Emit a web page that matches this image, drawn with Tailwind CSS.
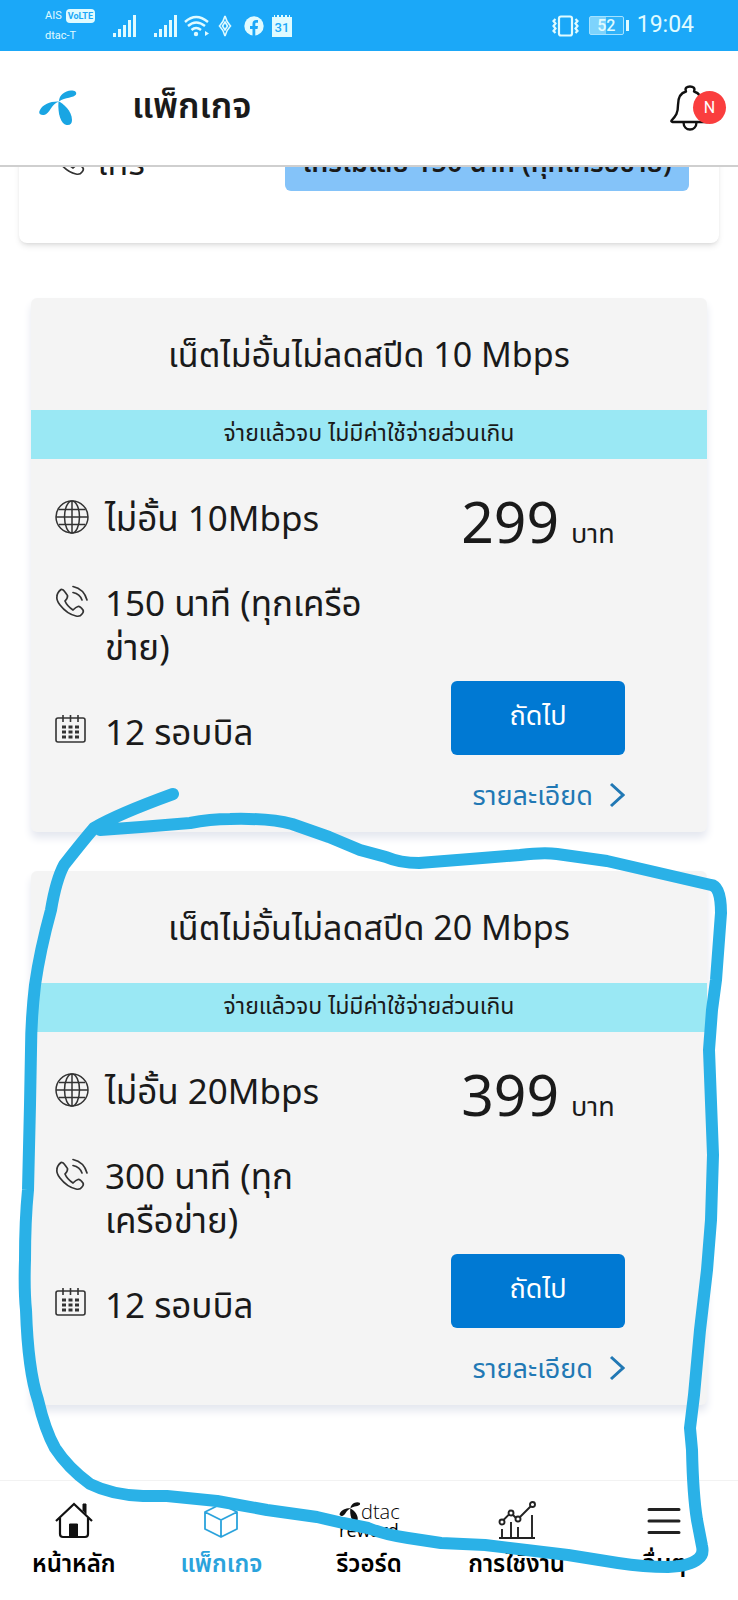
<!DOCTYPE html>
<html lang="th">
<head>
    <meta charset="UTF-8">
    <meta name="viewport" content="width=device-width, initial-scale=1.0">
    <title>แพ็กเกจ</title>
    <script src="https://cdn.jsdelivr.net/npm/@tailwindcss/browser@4"></script>
</head>
<body class="relative flex min-h-screen flex-col overflow-x-hidden bg-white font-['Noto_Sans','Noto_Sans_Thai',sans-serif] text-[#1a1a1a]">

    <!-- Status bar -->
    <div class="flex h-[51px] shrink-0 items-center bg-[#1ba8f8] pl-[45px] pr-11 font-['Roboto',sans-serif] text-[#e0fbff]">
        <div class="w-[68px] text-[11px] leading-5">
            <div class="flex items-center gap-1">AIS <span class="rounded-sm bg-[#e0fbff] px-0.5 text-[9px] font-bold leading-[14px] text-[#1ba8f8]">VoLTE</span></div>
            <div>dtac-T</div>
        </div>
        <svg class="h-[22px] w-6" viewBox="0 0 24 22" fill="currentColor"><path d="M0 18h3v4H0zM5 14h3v8H5zM10 10h3v12h-3zM15 5h3v17h-3zM20 0h3v22h-3z"/></svg>
        <svg class="ml-[17px] h-[22px] w-6" viewBox="0 0 24 22" fill="currentColor"><path d="M0 18h3v4H0zM5 14h3v8H5zM10 10h3v12h-3zM15 5h3v17h-3zM20 0h3v22h-3z"/></svg>
        <svg class="ml-1.5 h-[22px] w-[26px]" viewBox="0 0 26 22" fill="none" stroke="currentColor" stroke-width="2.4"><path d="M1 7Q12 -3 24 7M4 11Q12 4 21 11M7.500 15Q12 11 17 15"/><circle cx="12" cy="19" r="2.200" fill="currentColor" stroke="none"/><path d="M21 16v5l4-2.500z" fill="currentColor" stroke="none"/></svg>
        <svg class="ml-2 h-[22px] w-[14px]" viewBox="0 0 14 22" fill="none" stroke="currentColor" stroke-width="1.600"><path d="M7 1Q5.500 7 1.500 11Q5.500 15 7 21Q8.500 15 12.500 11Q8.500 7 7 1z"/><path d="M7 7l2.500 4L7 15l-2.500-4z"/></svg>
        <svg class="ml-3 h-5 w-5" viewBox="0 0 20 20"><circle cx="10" cy="10" r="9.700" fill="currentColor"/><path d="M8.500 20v-7H6v-3h2.500V7.800C8.500 5.200 10 4 12 4h2v2.700h-1.400c-1 0-1.300.5-1.300 1.300v2H14l-.5 3h-2.200v7z" fill="#1ba8f8"/></svg>
        <div class="ml-2 flex h-[22px] w-5 items-end justify-center border-t-2 border-dotted border-[#1ba8f8] bg-[#e0fbff] text-[13px] font-medium leading-[18px] text-[#1ba8f8]">31</div>
        <svg class="ml-auto h-[22px] w-[27px]" viewBox="0 0 27 22" fill="none" stroke="currentColor" stroke-width="2.200"><rect x="7" y="1.500" width="13" height="19" rx="2"/><path d="M3.500 4l-2 2 2 2.500-2 2.500 2 2.500-2 2.500 2 2M23.500 4l2 2-2 2.500 2 2.500-2 2.500 2 2.500-2 2"/></svg>
        <div class="ml-[10px] flex h-[19px] w-[35px] items-center justify-center rounded-xs border border-[#a5e2ff] bg-linear-to-r from-[#7dd3fc] from-50% to-[#2fb2f9] to-50% text-base font-medium">52</div>
        <div class="ml-0.5 h-[11px] w-[3px] bg-[#e0fbff]"></div>
        <div class="ml-2 text-[23px]">19:04</div>
    </div>

    <!-- Header -->
    <header class="z-10 flex h-[116px] shrink-0 items-center border-b-2 border-[#cfcfcf] bg-white pl-[39px] pr-3">
        <svg class="h-[36px] w-[38px]" viewBox="0 0 38 36" fill="#19a5e3"><path d="M20 11.500C20 5 26 1 32 .5c4 0 6 1.500 5 4C35 8 26 7 20 11.500z"/><path d="M20 11.500C12 11 4 14 1 20c-2 3 0 5.500 4 5 6-1 7-11 15-13.500z"/><path d="M19.500 11.500C24 13 33 21 33 30c0 4-2 5.500-5.500 5C22 34 18.500 24 19.500 11.500z"/></svg>
        <h1 class="-mt-1.5 ml-[55px] text-[35px] font-semibold">แพ็กเกจ</h1>
        <button class="relative ml-auto h-[46px] w-[57px]" aria-label="การแจ้งเตือน">
            <svg class="h-[46px] w-[42px]" viewBox="0 0 42 46" fill="none" stroke="#111" stroke-width="2.400" stroke-linejoin="round"><path d="M17 6.500C15.500 3 18 1.500 21 1.500s5.500 1.500 4 5C31 8 33 13 33 20c0 8 2 11 6.500 15.500.5.700 0 1.500-1 1.500H3.500c-1 0-1.500-1-1-1.500C7 31 9 28 9 20c0-7 2-12 8-13.500z"/><path d="M14.500 37c0 10 13 10 13 0"/></svg>
            <span class="absolute right-0 top-1.5 flex h-[33px] w-[33px] items-center justify-center rounded-full bg-[#fa3e3e] font-['Roboto',sans-serif] text-base text-white">N</span>
        </button>
    </header>

    <main class="flex-1 overflow-hidden">
        <!-- Previous card, scrolled under the header -->
        <section class="-mt-10 mx-[19px] flex h-[116px] items-start rounded-lg bg-white pl-9 pr-[30px] shadow-md">
            <svg class="mt-4 h-[34px] w-[34px]" viewBox="0 0 34 34" fill="none" stroke="#333" stroke-width="1.700" stroke-linecap="round"><path d="M2 11Q2 8 6 4.500Q8 4 10 7L12.500 10.500Q13 13 10 16Q12 21 18 25Q21 22 23 21.500Q25 21 28 25Q29 27 27 29Q25 32 21 31Q12 29 5 20Q1 15 2 11zM18 7.500Q25 9 27 15M18 1.500Q29 4 32 15"/></svg>
            <span class="ml-2 mt-3 text-[34px] leading-[46px]">โทร</span>
            <span class="ml-auto flex h-16 w-[404px] items-start justify-center rounded-md bg-[#84c3f9] pt-3 text-[27px] font-semibold leading-[46px]"><span class="whitespace-nowrap">โทรไม่เสีย 150 นาที (ทุกเครือข่าย)</span></span>
        </section>

        <!-- 10 Mbps -->
        <section class="mx-[31px] mt-[55px] h-[534px] rounded-md bg-[#f4f4f4] shadow-[0_6px_8px_#e4e7ef]">
            <h2 class="flex h-[112px] items-center justify-center text-[34px]">เน็ตไม่อั้นไม่ลดสปีด 10 Mbps</h2>
            <p class="flex h-[49px] items-center justify-center bg-[#9ae8f4] pb-1 text-[23px]">จ่ายแล้วจบ ไม่มีค่าใช้จ่ายส่วนเกิน</p>
            <div class="flex justify-between pl-6 pr-[82px]">
                <ul class="pt-[37px] text-[35px] leading-[44px]">
                    <li class="flex gap-4">
                        <svg class="mt-1 h-[34px] w-[34px] shrink-0" viewBox="0 0 34 34" fill="none" stroke="#333" stroke-width="1.500"><circle cx="17" cy="17" r="16"/><ellipse cx="17" cy="17" rx="7.500" ry="16"/><path d="M17 1v32M1 17h32M4 9.500h26M4 24.500h26"/></svg>
                        <span>ไม่อั้น 10Mbps</span>
                    </li>
                    <li class="mt-[41px] flex gap-4">
                        <svg class="mt-1 h-[34px] w-[34px] shrink-0" viewBox="0 0 34 34" fill="none" stroke="#333" stroke-width="1.700" stroke-linecap="round"><path d="M2 11Q2 8 6 4.500Q8 4 10 7L12.500 10.500Q13 13 10 16Q12 21 18 25Q21 22 23 21.500Q25 21 28 25Q29 27 27 29Q25 32 21 31Q12 29 5 20Q1 15 2 11zM18 7.500Q25 9 27 15M18 1.500Q29 4 32 15"/></svg>
                        <span class="whitespace-nowrap">150 นาที (ทุกเครือ<br>ข่าย)</span>
                    </li>
                    <li class="mt-[41px] flex gap-4">
                        <svg class="mt-1 h-[34px] w-[34px] shrink-0" viewBox="0 0 34 34" fill="none" stroke="#333" stroke-width="1.600"><rect x="1" y="4" width="29" height="24" rx="2"/><path d="M8 1v7M15.500 1v7M23 1v7"/><path d="M7 13h17M7 18h17M7 23h17" stroke-width="3" stroke-dasharray="4 2.500"/></svg>
                        <span>12 รอบบิล</span>
                    </li>
                </ul>
                <div class="flex w-[174px] flex-col">
                    <p class="mt-[26px] flex h-[72px] items-baseline justify-center gap-3 text-[57px] leading-[72px]">299 <span class="text-[27px]">บาท</span></p>
                    <button class="mt-[124px] h-[74px] rounded-md bg-[#0079d3] pb-1.5 text-[27px] text-white">ถัดไป</button>
                    <a href="#" class="mt-5 flex h-10 items-center justify-end gap-4 whitespace-nowrap text-[27px] text-[#2178b4]">รายละเอียด
                        <svg class="h-[26px] w-4" viewBox="0 0 16 26" fill="none" stroke="currentColor" stroke-width="3"><path d="M2 2l12 11L2 24"/></svg>
                    </a>
                </div>
            </div>
        </section>

        <!-- 20 Mbps -->
        <section class="mx-[31px] mt-[39px] h-[534px] rounded-md bg-[#f4f4f4] shadow-[0_6px_8px_#e4e7ef]">
            <h2 class="flex h-[112px] items-center justify-center text-[34px]">เน็ตไม่อั้นไม่ลดสปีด 20 Mbps</h2>
            <p class="flex h-[49px] items-center justify-center bg-[#9ae8f4] pb-1 text-[23px]">จ่ายแล้วจบ ไม่มีค่าใช้จ่ายส่วนเกิน</p>
            <div class="flex justify-between pl-6 pr-[82px]">
                <ul class="pt-[37px] text-[35px] leading-[44px]">
                    <li class="flex gap-4">
                        <svg class="mt-1 h-[34px] w-[34px] shrink-0" viewBox="0 0 34 34" fill="none" stroke="#333" stroke-width="1.500"><circle cx="17" cy="17" r="16"/><ellipse cx="17" cy="17" rx="7.500" ry="16"/><path d="M17 1v32M1 17h32M4 9.500h26M4 24.500h26"/></svg>
                        <span>ไม่อั้น 20Mbps</span>
                    </li>
                    <li class="mt-[41px] flex gap-4">
                        <svg class="mt-1 h-[34px] w-[34px] shrink-0" viewBox="0 0 34 34" fill="none" stroke="#333" stroke-width="1.700" stroke-linecap="round"><path d="M2 11Q2 8 6 4.500Q8 4 10 7L12.500 10.500Q13 13 10 16Q12 21 18 25Q21 22 23 21.500Q25 21 28 25Q29 27 27 29Q25 32 21 31Q12 29 5 20Q1 15 2 11zM18 7.500Q25 9 27 15M18 1.500Q29 4 32 15"/></svg>
                        <span class="whitespace-nowrap">300 นาที (ทุก<br>เครือข่าย)</span>
                    </li>
                    <li class="mt-[41px] flex gap-4">
                        <svg class="mt-1 h-[34px] w-[34px] shrink-0" viewBox="0 0 34 34" fill="none" stroke="#333" stroke-width="1.600"><rect x="1" y="4" width="29" height="24" rx="2"/><path d="M8 1v7M15.500 1v7M23 1v7"/><path d="M7 13h17M7 18h17M7 23h17" stroke-width="3" stroke-dasharray="4 2.500"/></svg>
                        <span>12 รอบบิล</span>
                    </li>
                </ul>
                <div class="flex w-[174px] flex-col">
                    <p class="mt-[26px] flex h-[72px] items-baseline justify-center gap-3 text-[57px] leading-[72px]">399 <span class="text-[27px]">บาท</span></p>
                    <button class="mt-[124px] h-[74px] rounded-md bg-[#0079d3] pb-1.5 text-[27px] text-white">ถัดไป</button>
                    <a href="#" class="mt-5 flex h-10 items-center justify-end gap-4 whitespace-nowrap text-[27px] text-[#2178b4]">รายละเอียด
                        <svg class="h-[26px] w-4" viewBox="0 0 16 26" fill="none" stroke="currentColor" stroke-width="3"><path d="M2 2l12 11L2 24"/></svg>
                    </a>
                </div>
            </div>
        </section>
    </main>

    <!-- Bottom navigation -->
    <nav class="grid h-[120px] shrink-0 grid-cols-5 border-t border-[#f2f2f2] bg-white pt-5 text-center text-2xl font-semibold leading-8 text-black">
        <a href="#" class="flex flex-col items-center gap-1.5">
            <svg class="h-10 w-[38px]" viewBox="0 0 38 40" fill="none" stroke="#111" stroke-width="2.200"><path d="M1 20L19 3l18 17M5 17v16q0 3 3 3h22q3 0 3-3V17"/><path d="M28 10V3h3v10M14.500 23h8v13h-8z" fill="#111" stroke-width="1"/></svg>
            หน้าหลัก
        </a>
        <a href="#" class="flex flex-col items-center gap-1.5 text-[#2ba3dc]">
            <svg class="h-10 w-[34px]" viewBox="0 0 34 40" fill="none" stroke="currentColor" stroke-width="1.800" stroke-linejoin="round"><path d="M17 3l16 8v17l-16 8-16-8V11zM1 11l16 8 16-8M17 19v17"/></svg>
            แพ็กเกจ
        </a>
        <a href="#" class="flex flex-col items-center gap-1.5">
            <span class="flex h-10 w-[60px] flex-col font-['Open_Sans',sans-serif] text-xl font-light leading-[22px]">
                <span class="flex items-center"><svg class="h-5 w-[22px] shrink-0" viewBox="0 0 38 36" fill="#111"><path d="M20 11.500C20 5 26 1 32 .5c4 0 6 1.500 5 4C35 8 26 7 20 11.500z"/><path d="M20 11.500C12 11 4 14 1 20c-2 3 0 5.500 4 5 6-1 7-11 15-13.500z"/><path d="M19.500 11.500C24 13 33 21 33 30c0 4-2 5.500-5.500 5C22 34 18.500 24 19.500 11.500z"/></svg>dtac</span>
                <span class="text-lg font-normal leading-[14px]">reward</span>
            </span>
            รีวอร์ด
        </a>
        <a href="#" class="flex flex-col items-center gap-1.5">
            <svg class="h-10 w-[38px]" viewBox="0 0 38 40" fill="none" stroke="#222" stroke-width="1.900"><path d="M1 37h36M4 37V28M13 37V21M20 37V26M34 37V14"/><path d="M5.500 19l6-6M15 14l3 3M22 16L33 5"/><circle cx="4" cy="21" r="2.500"/><circle cx="13" cy="12" r="2.500"/><circle cx="20" cy="18" r="2.500"/><circle cx="34.500" cy="3.500" r="2.500"/></svg>
            การใช้งาน
        </a>
        <a href="#" class="flex flex-col items-center gap-1.5">
            <svg class="h-10 w-[34px]" viewBox="0 0 34 40" stroke="#222" stroke-width="3" stroke-linecap="round"><path d="M2 8.500h30M2 20h30M2 31.500h30"/></svg>
            อื่นๆ
        </a>
    </nav>

    <!-- Hand-drawn marker loop -->
    <svg class="pointer-events-none absolute inset-x-0 top-0 z-20 w-full" viewBox="0 0 738 1600" fill="none" stroke="#2ab1e7" stroke-width="12" stroke-linejoin="round" stroke-linecap="round">
        <path d="M173 794Q118 814 94 828Q82 842 64 865Q56 880 51 910Q40 950 35 985Q31 1020 31 1050L30 1105L28 1190Q25 1220 25 1260Q24 1290 26 1310Q28 1370 38 1400Q45 1430 55 1448Q68 1468 90 1484Q112 1495 143 1496H167L217 1501L267 1510L317 1517L343 1523L368 1528Q386 1535 408 1538L441 1543L485 1545L518 1549L568 1555L618 1563Q644 1567 668 1567Q690 1566 698 1559Q704 1555 702 1546L697 1520Q693 1495 692 1450L690 1428L694 1395L700 1330L707 1270L711 1220L713 1155L709 1050L712 1010L716 980L721 913Q721 886 711 885L659 873L607 861L557 854Q544 852 520 855L470 859L419 863Q400 863 386 857L360 850L329 837L292 824Q270 818 230 819Q210 819 190 823L141 827L100 830"/>
    </svg>

</body>
</html>
